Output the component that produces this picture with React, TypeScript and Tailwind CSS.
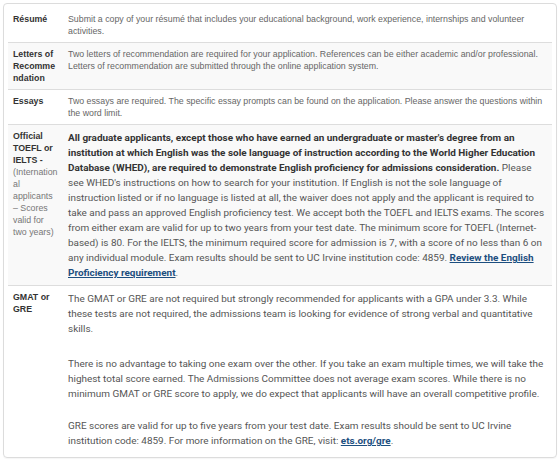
const sans = "font-['Liberation_Sans',Arial,sans-serif]";
const roboto = "font-['Roboto','Liberation_Sans',sans-serif]";

function Row({ label, children, shaded, first }: { label: React.ReactNode; children: React.ReactNode; shaded?: boolean; first?: boolean }) {
  return (
    <div className={`flex ${first ? '' : 'border-t border-[#dddddd]'} ${shaded ? 'bg-[#f9f9f9]' : 'bg-white'}`}>
      <div className={`w-[55px] shrink-0 pl-[5px] pr-[4px] py-[5px] text-[8.8px] leading-[12px] text-[#333] break-words ${sans}`}>
        {label}
      </div>
      <div className="flex-1 min-w-0 pl-[5px] pr-[3px] py-[5px]">{children}</div>
    </div>
  );
}

function Small({ children }: { children: React.ReactNode }) {
  return <p className={`text-[8.8px] leading-[12px] text-[#666] ${sans}`}>{children}</p>;
}

export default function App() {
  return (
    <div className="bg-white w-[560px] h-[462px] p-[3px]">
      <div className="border border-[#dcdcdc] rounded-[4px] p-[4px] shadow-[0_1px_1px_rgba(0,0,0,0.04)]">
        <Row first label={<b>Résumé</b>}>
          <Small>
            Submit a copy of your résumé that includes your educational background, work experience, internships and volunteer activities.
          </Small>
        </Row>
        <Row shaded label={<b>Letters of Recommendation</b>}>
          <Small>
            Two letters of recommendation are required for your application. References can be either academic and/or professional. Letters of recommendation are submitted through the online application system.
          </Small>
        </Row>
        <Row label={<b>Essays</b>}>
          <Small>
            Two essays are required. The specific essay prompts can be found on the application. Please answer the questions within the word limit.
          </Small>
        </Row>
        <Row
          shaded
          label={
            <>
              <b>Official TOEFL or IELTS -</b>{' '}
              <span className="text-[#777]">(International applicants – Scores valid for two years)</span>
            </>
          }
        >
          <p className={`text-[9.95px] leading-[15px] text-[#555] ${roboto}`}>
            <b className="text-[#333]">
              All graduate applicants, except those who have earned an undergraduate or master's degree from an institution at which English was the sole language of instruction according to the World Higher Education Database (WHED), are required to demonstrate English proficiency for admissions consideration.
            </b>{' '}
            Please see WHED's instructions on how to search for your institution. If English is not the sole language of instruction listed or if no language is listed at all, the waiver does not apply and the applicant is required to take and pass an approved English proficiency test. We accept both the TOEFL and IELTS exams. The scores from either exam are valid for up to two years from your test date. The minimum score for TOEFL (Internet-based) is 80. For the IELTS, the minimum required score for admission is 7, with a score of no less than 6 on any individual module. Exam results should be sent to UC Irvine institution code: 4859.{' '}
            <a className="font-bold text-[#1d4f80] underline">Review the English Proficiency requirement</a>.
          </p>
        </Row>
        <Row label={<b>GMAT or GRE</b>}>
          <div className={`text-[9.95px] leading-[15px] text-[#555] ${roboto}`}>
            <p>
              The GMAT or GRE are not required but strongly recommended for applicants with a GPA under 3.3. While these tests are not required, the admissions team is looking for evidence of strong verbal and quantitative skills.
            </p>
            <p className="mt-[20px]">
              There is no advantage to taking one exam over the other. If you take an exam multiple times, we will take the highest total score earned. The Admissions Committee does not average exam scores. While there is no minimum GMAT or GRE score to apply, we do expect that applicants will have an overall competitive profile.
            </p>
            <p className="mt-[17px]">
              GRE scores are valid for up to five years from your test date. Exam results should be sent to UC Irvine institution code: 4859. For more information on the GRE, visit:{' '}
              <a className="font-bold text-[#1d4f80] underline">ets.org/gre</a>.
            </p>
          </div>
        </Row>
      </div>
    </div>
  );
}
